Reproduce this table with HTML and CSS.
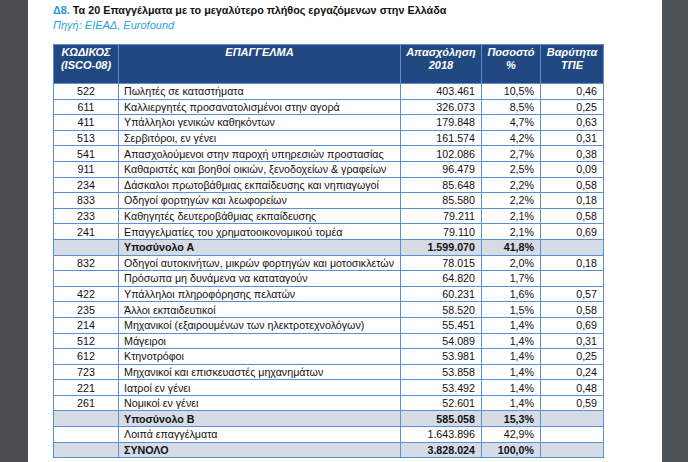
FILE: index.html
```html
<!DOCTYPE html>
<html lang="el">
<head>
<meta charset="utf-8">
<link rel="stylesheet" href="styles.css">
</head>
<body>
<div class="viewer">
  <div class="side side-left"></div>
  <main class="page">
    <h1 class="title"><span class="num">Δ8.</span> Τα 20 Επαγγέλματα με το μεγαλύτερο πλήθος εργαζόμενων στην Ελλάδα</h1>
    <p class="source">Πηγή: ΕΙΕΑΔ, Eurofound</p>
    <table class="data">
      <colgroup>
        <col class="c-code"><col class="c-job"><col class="c-emp"><col class="c-pct"><col class="c-tpe">
      </colgroup>
      <thead>
        <tr>
          <th>ΚΩΔΙΚΟΣ<br>(ISCO-08)</th>
          <th>ΕΠΑΓΓΕΛΜΑ</th>
          <th>Απασχόληση<br>2018</th>
          <th>Ποσοστό<br>%</th>
          <th>Βαρύτητα<br>ΤΠΕ</th>
        </tr>
      </thead>
      <tbody>
        <tr><td class="code">522</td><td>Πωλητές σε καταστήματα</td><td class="n">403.461</td><td class="n">10,5%</td><td class="n">0,46</td></tr>
        <tr><td class="code">611</td><td>Καλλιεργητές προσανατολισμένοι στην αγορά</td><td class="n">326.073</td><td class="n">8,5%</td><td class="n">0,25</td></tr>
        <tr><td class="code">411</td><td>Υπάλληλοι γενικών καθηκόντων</td><td class="n">179.848</td><td class="n">4,7%</td><td class="n">0,63</td></tr>
        <tr><td class="code">513</td><td>Σερβιτόροι, εν γένει</td><td class="n">161.574</td><td class="n">4,2%</td><td class="n">0,31</td></tr>
        <tr><td class="code">541</td><td>Απασχολούμενοι στην παροχή υπηρεσιών προστασίας</td><td class="n">102.086</td><td class="n">2,7%</td><td class="n">0,38</td></tr>
        <tr><td class="code">911</td><td>Καθαριστές και βοηθοί οικιών, ξενοδοχείων &amp; γραφείων</td><td class="n">96.479</td><td class="n">2,5%</td><td class="n">0,09</td></tr>
        <tr><td class="code">234</td><td>Δάσκαλοι πρωτοβάθμιας εκπαίδευσης και νηπιαγωγοί</td><td class="n">85.648</td><td class="n">2,2%</td><td class="n">0,58</td></tr>
        <tr><td class="code">833</td><td>Οδηγοί φορτηγών και λεωφορείων</td><td class="n">85.580</td><td class="n">2,2%</td><td class="n">0,18</td></tr>
        <tr><td class="code">233</td><td>Καθηγητές δευτεροβάθμιας εκπαίδευσης</td><td class="n">79.211</td><td class="n">2,1%</td><td class="n">0,58</td></tr>
        <tr><td class="code">241</td><td>Επαγγελματίες του χρηματοοικονομικού τομέα</td><td class="n">79.110</td><td class="n">2,1%</td><td class="n">0,69</td></tr>
        <tr class="sub"><td></td><td>Υποσύνολο Α</td><td class="n">1.599.070</td><td class="n">41,8%</td><td></td></tr>
        <tr><td class="code">832</td><td>Οδηγοί αυτοκινήτων, μικρών φορτηγών και μοτοσικλετών</td><td class="n">78.015</td><td class="n">2,0%</td><td class="n">0,18</td></tr>
        <tr><td class="code"></td><td>Πρόσωπα μη δυνάμενα να καταταγούν</td><td class="n">64.820</td><td class="n">1,7%</td><td class="n"></td></tr>
        <tr><td class="code">422</td><td>Υπάλληλοι πληροφόρησης πελατών</td><td class="n">60.231</td><td class="n">1,6%</td><td class="n">0,57</td></tr>
        <tr><td class="code">235</td><td>Άλλοι εκπαιδευτικοί</td><td class="n">58.520</td><td class="n">1,5%</td><td class="n">0,58</td></tr>
        <tr><td class="code">214</td><td>Μηχανικοί (εξαιρουμένων των ηλεκτροτεχνολόγων)</td><td class="n">55.451</td><td class="n">1,4%</td><td class="n">0,69</td></tr>
        <tr><td class="code">512</td><td>Μάγειροι</td><td class="n">54.089</td><td class="n">1,4%</td><td class="n">0,31</td></tr>
        <tr><td class="code">612</td><td>Κτηνοτρόφοι</td><td class="n">53.981</td><td class="n">1,4%</td><td class="n">0,25</td></tr>
        <tr><td class="code">723</td><td>Μηχανικοί και επισκευαστές μηχανημάτων</td><td class="n">53.858</td><td class="n">1,4%</td><td class="n">0,24</td></tr>
        <tr><td class="code">221</td><td>Ιατροί εν γένει</td><td class="n">53.492</td><td class="n">1,4%</td><td class="n">0,48</td></tr>
        <tr><td class="code">261</td><td>Νομικοί εν γένει</td><td class="n">52.601</td><td class="n">1,4%</td><td class="n">0,59</td></tr>
        <tr class="sub"><td></td><td>Υποσύνολο Β</td><td class="n">585.058</td><td class="n">15,3%</td><td></td></tr>
        <tr><td></td><td>Λοιπά επαγγέλματα</td><td class="n">1.643.896</td><td class="n">42,9%</td><td></td></tr>
        <tr class="sub"><td></td><td>ΣΥΝΟΛΟ</td><td class="n">3.828.024</td><td class="n">100,0%</td><td></td></tr>
      </tbody>
    </table>
  </main>
  <div class="side side-right"></div>
</div>
</body>
</html>
```

FILE: styles.css
```css
html, body {
  margin: 0;
  padding: 0;
  height: 100%;
  background: #ffffff;
}

.viewer {
  display: flex;
  height: 462px;
  overflow: hidden;
  font-family: "Liberation Sans", Arial, sans-serif;
}

.side {
  flex: none;
  background: #4b4e51;
}

.side-left {
  width: 28px;
}

.side-right {
  width: 26px;
  background: #505356;
}

.page {
  flex: 1;
  background: #ffffff;
  padding: 3px 0 0 25px;
  overflow: hidden;
}

.title {
  margin: 0;
  font-size: 10.8px;
  font-weight: bold;
  line-height: 14px;
  color: #111111;
}

.title .num {
  color: #1b9ad8;
}

.source {
  margin: 1px 0 0;
  font-size: 11px;
  font-style: italic;
  line-height: 14px;
  color: #2aa3dd;
}

.data {
  margin-top: 12px;
  border-collapse: collapse;
  table-layout: fixed;
  width: 550px;
  font-size: 10.7px;
  color: #111111;
}

.c-code { width: 65px; }
.c-job { width: 282px; }
.c-emp { width: 81px; }
.c-pct { width: 59px; }
.c-tpe { width: 63px; }

.data th {
  background: #21497f;
  color: #ffffff;
  font-weight: bold;
  font-style: italic;
  font-size: 11px;
  line-height: 12.5px;
  vertical-align: top;
  padding: 1px 2px 12px;
  border: 1px solid #5d8fcf;
  text-align: center;
  height: 24px;
}

.data td {
  border: 1px solid #5b8fd0;
  padding: 0 5px;
  height: 14.6px;
  line-height: 14px;
  white-space: nowrap;
  overflow: hidden;
}

.data td.code {
  text-align: center;
}

.data td.n {
  text-align: right;
  padding-right: 6px;
}

.data tr.sub td {
  background: #d5dce6;
  font-weight: bold;
}
```
